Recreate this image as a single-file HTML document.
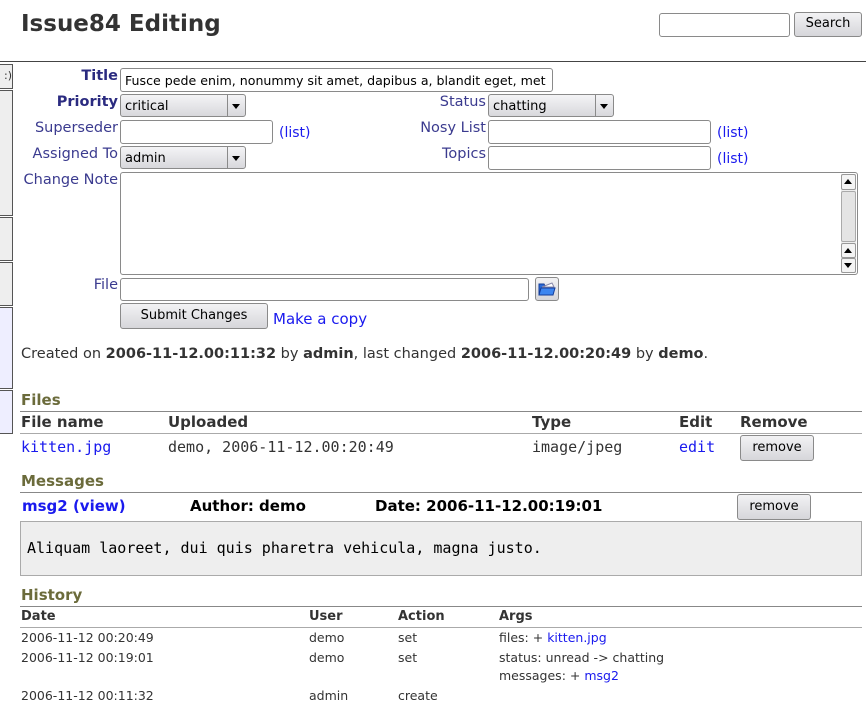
<!DOCTYPE html>
<html><head><meta charset="utf-8"><style>
*{box-sizing:border-box}
body{margin:0;width:866px;height:713px;overflow:hidden;background:#fff;font-family:"DejaVu Sans","Liberation Sans",sans-serif;font-size:14px;color:#333;position:relative}
.a{position:absolute;white-space:nowrap}
.lab{color:#3b3b8f;text-align:right;font-size:14.5px}
.inp{position:absolute;border:1px solid #8a8a8a;border-radius:3px;background:#fff;height:24px;font-size:13px;padding:3px 4px;color:#000;overflow:hidden;white-space:nowrap}
.sel{position:absolute;border:1px solid #8a8a8a;border-radius:3px;background:linear-gradient(#f4f4f6,#d8d8dc);height:23px;font-size:13px;padding:4px 4px 2px;color:#000}
.sel:after{content:"";position:absolute;right:0;top:0;width:17px;height:21px;border-left:1px solid #8a8a8a}
.sel i{position:absolute;right:5px;top:9px;border-left:4px solid transparent;border-right:4px solid transparent;border-top:5px solid #000}
.btn{position:absolute;border:1px solid #8a8a8a;border-radius:3px;background:linear-gradient(#f2f2f4,#d6d6da);font-size:13px;text-align:center;color:#000}
.lnk{color:#1a1aee}
.side{position:absolute;left:-2px;width:15px;border:1px solid #555;background:#eee}
.h{color:#6b6b3b;font-weight:bold;font-size:15px}
.line{position:absolute;left:20px;right:4px;height:1px;background:#888}
.line2{position:absolute;left:20px;right:4px;height:1px;background:#aaa}
.mono{font-family:"DejaVu Sans Mono","Liberation Mono",monospace}
.hs{font-size:12.5px}
</style></head><body>
<div class="a" style="left:21px;top:11px;font-size:23px;font-weight:bold;color:#333">Issue84 Editing</div>
<div class="inp" style="left:659px;top:13px;width:131px;height:24px"></div>
<div class="btn" style="left:794px;top:12px;width:68px;height:25px;line-height:22px;font-size:13px">Search</div>
<div style="position:absolute;left:0;right:0;top:61px;height:1px;background:#444"></div>

<div class="side" style="top:64px;height:25px;font-size:11px;line-height:22px;text-align:right;color:#333">:)</div>
<div class="side" style="top:90px;height:126px"></div>
<div class="side" style="top:217px;height:44px"></div>
<div class="side" style="top:262px;height:44px"></div>
<div class="side" style="top:307px;height:82px;background:#eeeeff"></div>
<div class="side" style="top:390px;height:44px;background:#eeeeff"></div>

<div class="a lab" style="right:748px;top:68px;font-weight:bold;color:#2b2b80">Title</div>
<div class="inp" style="left:120px;top:68px;width:433px;height:24px;padding-top:4px;font-size:12.6px">Fusce pede enim, nonummy sit amet, dapibus a, blandit eget, met</div>
<div class="a lab" style="right:748px;top:94px;font-weight:bold;color:#2b2b80">Priority</div>
<div class="sel" style="left:120px;top:94px;width:126px">critical<i></i></div>
<div class="a lab" style="right:380px;top:94px">Status</div>
<div class="sel" style="left:488px;top:94px;width:126px">chatting<i></i></div>
<div class="a lab" style="right:748px;top:120px">Superseder</div>
<div class="inp" style="left:120px;top:120px;width:153px;height:24px"></div>
<div class="a lnk" style="left:279px;top:125px">(list)</div>
<div class="a lab" style="right:380px;top:120px">Nosy List</div>
<div class="inp" style="left:488px;top:120px;width:223px;height:24px"></div>
<div class="a lnk" style="left:717px;top:125px">(list)</div>
<div class="a lab" style="right:748px;top:146px">Assigned To</div>
<div class="sel" style="left:120px;top:146px;width:126px">admin<i></i></div>
<div class="a lab" style="right:380px;top:146px">Topics</div>
<div class="inp" style="left:488px;top:146px;width:223px;height:24px"></div>
<div class="a lnk" style="left:717px;top:151px">(list)</div>
<div class="a lab" style="right:748px;top:172px">Change Note</div>
<div class="inp" style="left:120px;top:172px;width:738px;height:103px">
 <div style="position:absolute;right:1px;top:1px;width:15px;height:99px;background:#eee">
  <div style="position:absolute;left:0;top:0;width:15px;height:16px;border:1px solid #999;border-radius:2px;background:#f4f4f4"></div>
  <div style="position:absolute;left:3px;top:5px;border-left:4px solid transparent;border-right:4px solid transparent;border-bottom:5px solid #000"></div>
  <div style="position:absolute;left:0;top:17px;width:15px;height:51px;border:1px solid #aaa;border-radius:2px;background:#e4e4e4"></div>
  <div style="position:absolute;left:0;top:69px;width:15px;height:15px;border:1px solid #999;border-radius:2px;background:#f4f4f4"></div>
  <div style="position:absolute;left:3px;top:74px;border-left:4px solid transparent;border-right:4px solid transparent;border-bottom:5px solid #000"></div>
  <div style="position:absolute;left:0;top:84px;width:15px;height:15px;border:1px solid #999;border-radius:2px;background:#f4f4f4"></div>
  <div style="position:absolute;left:3px;top:89px;border-left:4px solid transparent;border-right:4px solid transparent;border-top:5px solid #000"></div>
 </div>
</div>
<div class="a lab" style="right:748px;top:277px">File</div>
<div class="inp" style="left:120px;top:278px;width:409px;height:23px"></div>
<div class="btn" style="left:535px;top:277px;width:24px;height:24px">
 <svg width="18" height="16" viewBox="0 0 18 16" style="position:absolute;left:2px;top:3px"><path d="M1 3h5l1 2h8v9H1z" fill="#2a6ad8" stroke="#123c9a"/><path d="M4 6l10-4 2 4z" fill="#fff" stroke="#88a"/><path d="M3 7h14l-2 7H1z" fill="#3d86f0" stroke="#123c9a"/></svg>
</div>
<div class="btn" style="left:120px;top:303px;width:148px;height:26px;line-height:24px">Submit Changes</div>
<div class="a lnk" style="left:273px;top:310px;font-size:15px">Make a copy</div>

<div class="a" style="left:21px;top:346px;font-size:14.5px">Created on <b>2006-11-12.00:11:32</b> by <b>admin</b>, last changed <b>2006-11-12.00:20:49</b> by <b>demo</b>.</div>

<div class="a h" style="left:21px;top:391px">Files</div>
<div class="line" style="top:411px"></div>
<div class="a" style="left:21px;top:413px;font-weight:bold;font-size:15px">File name</div>
<div class="a" style="left:168px;top:413px;font-weight:bold;font-size:15px">Uploaded</div>
<div class="a" style="left:532px;top:413px;font-weight:bold;font-size:15px">Type</div>
<div class="a" style="left:679px;top:413px;font-weight:bold;font-size:15px">Edit</div>
<div class="a" style="left:740px;top:413px;font-weight:bold;font-size:15px">Remove</div>
<div class="line2" style="top:433px"></div>
<div class="a mono lnk" style="left:21px;top:438px;font-size:15px">kitten.jpg</div>
<div class="a mono" style="left:168px;top:438px;font-size:15px">demo, 2006-11-12.00:20:49</div>
<div class="a mono" style="left:532px;top:438px;font-size:15px">image/jpeg</div>
<div class="a mono lnk" style="left:679px;top:438px;font-size:15px">edit</div>
<div class="btn" style="left:740px;top:435px;width:74px;height:26px;line-height:24px">remove</div>

<div class="a h" style="left:21px;top:472px">Messages</div>
<div class="line" style="top:492px"></div>
<div class="a lnk" style="left:22px;top:497px;font-weight:bold;font-size:15px">msg2 (view)</div>
<div class="a" style="left:190px;top:497px;font-weight:bold;font-size:15px;color:#000">Author: demo</div>
<div class="a" style="left:375px;top:497px;font-weight:bold;font-size:15px;color:#000">Date: 2006-11-12.00:19:01</div>
<div class="btn" style="left:737px;top:494px;width:74px;height:26px;line-height:24px">remove</div>
<div style="position:absolute;left:20px;top:521px;width:842px;height:55px;background:#eee;border:1px solid #aaa"></div>
<div class="a mono" style="left:27px;top:539px;font-size:15px;color:#000">Aliquam laoreet, dui quis pharetra vehicula, magna justo.</div>

<div class="a h" style="left:21px;top:586px">History</div>
<div class="line" style="top:606px"></div>
<div class="a hs" style="left:21px;top:609px;font-weight:bold;font-size:13px">Date</div>
<div class="a hs" style="left:309px;top:609px;font-weight:bold;font-size:13px">User</div>
<div class="a hs" style="left:398px;top:609px;font-weight:bold;font-size:13px">Action</div>
<div class="a hs" style="left:499px;top:609px;font-weight:bold;font-size:13px">Args</div>
<div class="line2" style="top:627px"></div>
<div class="a hs" style="left:21px;top:630px">2006-11-12 00:20:49</div>
<div class="a hs" style="left:309px;top:630px">demo</div>
<div class="a hs" style="left:398px;top:630px">set</div>
<div class="a hs" style="left:499px;top:630px">files: + <span class="lnk">kitten.jpg</span></div>
<div class="a hs" style="left:21px;top:650px">2006-11-12 00:19:01</div>
<div class="a hs" style="left:309px;top:650px">demo</div>
<div class="a hs" style="left:398px;top:650px">set</div>
<div class="a hs" style="left:499px;top:650px">status: unread -&gt; chatting</div>
<div class="a hs" style="left:499px;top:668px">messages: + <span class="lnk">msg2</span></div>
<div class="a hs" style="left:21px;top:688px">2006-11-12 00:11:32</div>
<div class="a hs" style="left:309px;top:688px">admin</div>
<div class="a hs" style="left:398px;top:688px">create</div>
</body></html>
